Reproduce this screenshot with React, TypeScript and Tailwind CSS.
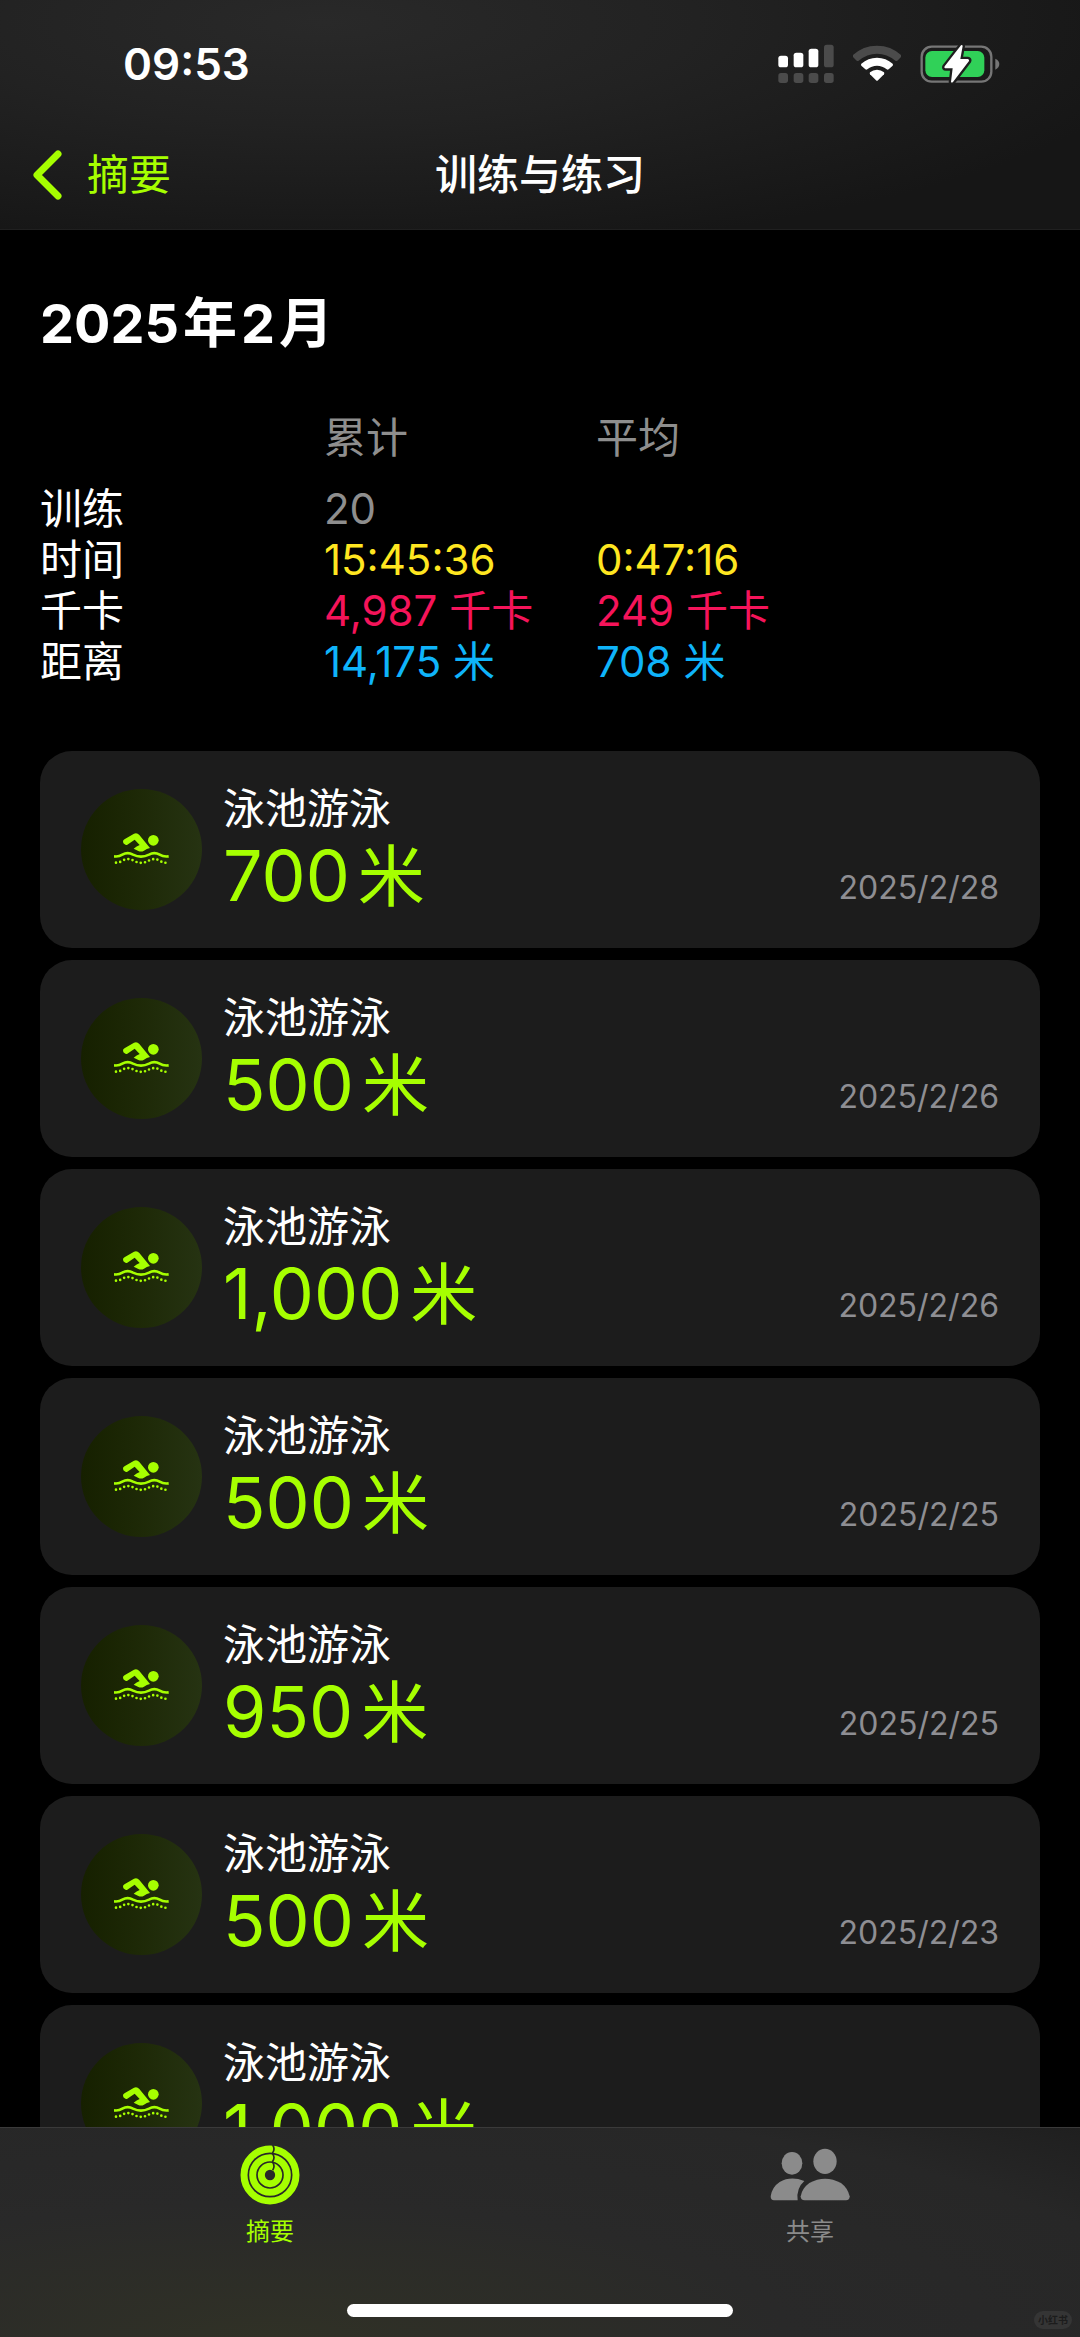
interface Workout {
  distance: string
  date: string
}

const workouts: Workout[] = [
  { distance: '700', date: '2025/2/28' },
  { distance: '500', date: '2025/2/26' },
  { distance: '1,000', date: '2025/2/26' },
  { distance: '500', date: '2025/2/25' },
  { distance: '950', date: '2025/2/25' },
  { distance: '500', date: '2025/2/23' },
  { distance: '1,000', date: '2025/2/22' }
]

const summary = [
  { label: '训练', total: '20', average: '', color: 'text-[#8e8e8e]' },
  { label: '时间', total: '15:45:36', average: '0:47:16', color: 'text-[#ffe620]' },
  { label: '千卡', total: '4,987 千卡', average: '249 千卡', color: 'text-[#f5145a]' },
  { label: '距离', total: '14,175 米', average: '708 米', color: 'text-[#0fb4fa]' }
]

function SignalIcon() {
  return (
    <svg className="w-[56px] h-[40px]" viewBox="112 72 168 120" aria-hidden="true">
      <g fill="#fff">
        <rect x="113" y="107" width="29" height="35" rx="8" />
        <rect x="159" y="98" width="29" height="44" rx="8" />
        <rect x="204" y="86" width="29" height="56" rx="8" />
      </g>
      <g fill="#4b4b4b">
        <rect x="250" y="74" width="29" height="68" rx="8" />
        <rect x="113" y="159" width="29" height="30" rx="8" />
        <rect x="159" y="159" width="29" height="30" rx="8" />
        <rect x="204" y="159" width="29" height="30" rx="8" />
        <rect x="250" y="159" width="29" height="30" rx="8" />
      </g>
    </svg>
  )
}

function WifiIcon() {
  return (
    <svg className="w-[48px] h-[40px]" viewBox="336 72 144 120" aria-hidden="true">
      <path d="M336 105 Q366 77 408 77 Q450 77 480 105 Q482 108 480 111 L469 122 Q466 124 463 122 Q438 101 408 101 Q378 101 353 122 Q350 124 347 122 L336 111 Q334 108 336 105 Z" fill="#4b4b4b" />
      <path d="M361 131 Q381 113 408 113 Q435 113 455 131 Q457 134 455 137 L443 148 Q440 150 437 148 Q424 137 408 137 Q392 137 379 148 Q376 150 373 148 L361 137 Q359 134 361 131 Z" fill="#fff" />
      <path d="M387 157 Q396 149 408 149 Q420 149 429 157 Q431 160 429 163 L411 181 Q408 184 405 181 L387 163 Q385 160 387 157 Z" fill="#fff" />
    </svg>
  )
}

function BatteryIcon() {
  return (
    <svg className="w-[80px] h-[40px]" viewBox="536 70 240 120" aria-hidden="true">
      <rect x="541" y="78" width="209" height="105" rx="30" fill="none" stroke="#767676" strokeWidth="7" />
      <path d="M762 114 Q774 120 774 130 Q774 141 762 147 Z" fill="#767676" />
      <rect x="552" y="91" width="177" height="78" rx="20" fill="#30d158" />
      <path d="M659 74 L610 137 Q607 143 614 143 L634 143 L629 184 Q631 187 635 184 L683 121 Q685 116 679 115 L657 115 L664 76 Q663 72 659 74 Z" fill="#fff" stroke="#1e1e1e" strokeWidth="14" strokeLinejoin="round" paintOrder="stroke" />
    </svg>
  )
}

function SwimIcon() {
  return (
    <svg className="w-[56px] h-[34px]" viewBox="250 275 168 102" aria-hidden="true">
      <circle cx="368" cy="297" r="16" fill="#a6ff00" />
      <path d="M282 309 Q275 304 278 297 Q280 294 284 292 L310 277 Q319 273 326 281 L358 320 Q348 322 340 328 Q332 333 323 329 Q315 324 309 322 Q318 314 327 311 L312 295 L290 310 Q286 312 282 309 Z" fill="#a6ff00" />
      <path d="M250 345 Q264 347 275 340 Q291 331 307 340 Q331 352 355 340 Q371 331 387 340 Q398 347 414 345" fill="none" stroke="#a6ff00" strokeWidth="8" />
      <path d="M256 364 Q266 365 277 357 Q293 349 309 358 Q331 371 354 358 Q370 349 386 357 Q397 366 409 364" fill="none" stroke="#a6ff00" strokeWidth="8" strokeLinecap="round" strokeDasharray="0 13" />
    </svg>
  )
}

function RingsIcon() {
  return (
    <svg className="w-[60px] h-[60px]" viewBox="0 0 180 180" fill="none" aria-hidden="true">
      <circle cx="90" cy="90" r="78" stroke="#a6ff00" strokeWidth="21" />
      <circle cx="90" cy="90" r="52" stroke="#a6ff00" strokeWidth="21" />
      <circle cx="90" cy="90" r="26" stroke="#a6ff00" strokeWidth="21" />
      <path d="M98 0 Q106 12 98 23 L98 26 Q106 38 98 49 L98 52 Q106 64 98 76" stroke="#282a22" strokeWidth="5" />
    </svg>
  )
}

function PeopleIcon() {
  return (
    <svg className="w-[80px] h-[60px]" viewBox="328 135 240 180" fill="#8b8b8b" aria-hidden="true">
      <ellipse cx="394" cy="190" rx="31" ry="34" />
      <ellipse cx="493" cy="184" rx="35" ry="38" />
      <path d="M340 301 Q330 301 330 289 Q334 261 357 246 Q390 227 431 243 Q406 265 411 301 Z" />
      <path d="M432 301 Q420 301 420 289 Q424 265 446 249 Q493 223 541 249 Q562 265 567 289 Q567 301 556 301 Z" />
    </svg>
  )
}

function WorkoutCard({ distance, date }: Workout) {
  return (
    <li className="flex items-center rounded-[32px] bg-[#1c1c1c] px-[41px] h-[197px]">
      <div className="flex h-[121px] w-[121px] shrink-0 items-center justify-center rounded-full bg-linear-to-r from-[#162000] to-[#263312]">
        <SwimIcon />
      </div>
      <div className="ml-[21px] flex-1 pt-1">
        <h3 className="text-[42px] leading-[50px] text-white">泳池游泳</h3>
        <p className="flex items-baseline gap-2 text-[70px] leading-[84px] text-[#a6ff00]">
          <span>{distance}</span>
          <span className="text-[67px]">米</span>
        </p>
      </div>
      <time className="mt-19 text-[32px] leading-[40px] text-[#8e8e93]">{date}</time>
    </li>
  )
}

export default function App() {
  return (
    <div className="flex h-screen flex-col overflow-hidden bg-black text-white font-[Inter,'Noto_Sans_CJK_SC',sans-serif]">
      <header className="shrink-0 border-b border-[#202020] bg-[#181818] bg-[radial-gradient(ellipse_at_30%_10%,#292929_0%,#222222_35%,#161616_80%)] pb-[7px]">
        <div className="flex h-[128px] items-center justify-between pl-[123px] pr-[80px]">
          <time className="text-[44px] font-semibold leading-[52px]">09:53</time>
          <div className="flex items-center gap-[19px]">
            <SignalIcon />
            <WifiIcon />
            <BatteryIcon />
          </div>
        </div>
        <div className="grid h-[94px] grid-cols-[1fr_auto_1fr] items-center px-[31px]">
          <button type="button" className="flex items-center gap-6 text-[42px] leading-[50px] text-[#a6ff00]">
            <svg className="h-[50px] w-[32px]" viewBox="0 0 32 50" fill="none" aria-hidden="true">
              <path d="M27 4 L6 25 L27 46" stroke="currentColor" strokeWidth="7" strokeLinecap="round" strokeLinejoin="round" />
            </svg>
            摘要
          </button>
          <h1 className="text-[42px] font-medium leading-[50px]">训练与练习</h1>
        </div>
      </header>

      <main className="min-h-0 flex-1 overflow-hidden px-10">
        <h2 className="mt-[61px] flex gap-1 text-[54px] font-bold leading-[66px]">
          <span>2025</span>
          <span>年</span>
          <span>2</span>
          <span>月</span>
        </h2>

        <table className="mt-[55px] w-full table-fixed text-left text-[42px] leading-[51px]">
          <colgroup>
            <col className="w-[284px]" />
            <col className="w-[272px]" />
            <col />
          </colgroup>
          <thead>
            <tr className="text-[#8e8e8e]">
              <td />
              <th scope="col" className="pb-5 font-normal">累计</th>
              <th scope="col" className="pb-5 font-normal">平均</th>
            </tr>
          </thead>
          <tbody>
            {summary.map(({ label, total, average, color }) => (
              <tr key={label} className={color}>
                <th scope="row" className="font-normal text-white">{label}</th>
                <td>{total}</td>
                <td>{average}</td>
              </tr>
            ))}
          </tbody>
        </table>

        <ul className="mt-16 flex flex-col gap-3">
          {workouts.map((workout, i) => (
            <WorkoutCard key={i} {...workout} />
          ))}
        </ul>
      </main>

      {/* Tab bar */}
      <nav className="relative h-[210px] shrink-0 border-t border-[#3a3a3a] bg-[#272727] bg-[radial-gradient(ellipse_at_25%_100%,#303126_0%,#292929_45%,#272727_80%,#1f1f1f_100%)]">
        <div className="grid grid-cols-2 pt-[17px] text-[24px] leading-[30px]">
          <button type="button" className="flex flex-col items-center gap-3 text-[#a6ff00]">
            <RingsIcon />
            摘要
          </button>
          <button type="button" className="flex flex-col items-center gap-3 text-[#8b8b8b]">
            <PeopleIcon />
            共享
          </button>
        </div>
        <div className="absolute bottom-5 left-1/2 h-[13px] w-[386px] -translate-x-1/2 rounded-full bg-white" />
        <span className="absolute bottom-2 right-2 rounded-full bg-[#353535] px-1 text-[10px] font-bold leading-[18px] text-[#1c1c1c]">
          小红书
        </span>
      </nav>
    </div>
  )
}
